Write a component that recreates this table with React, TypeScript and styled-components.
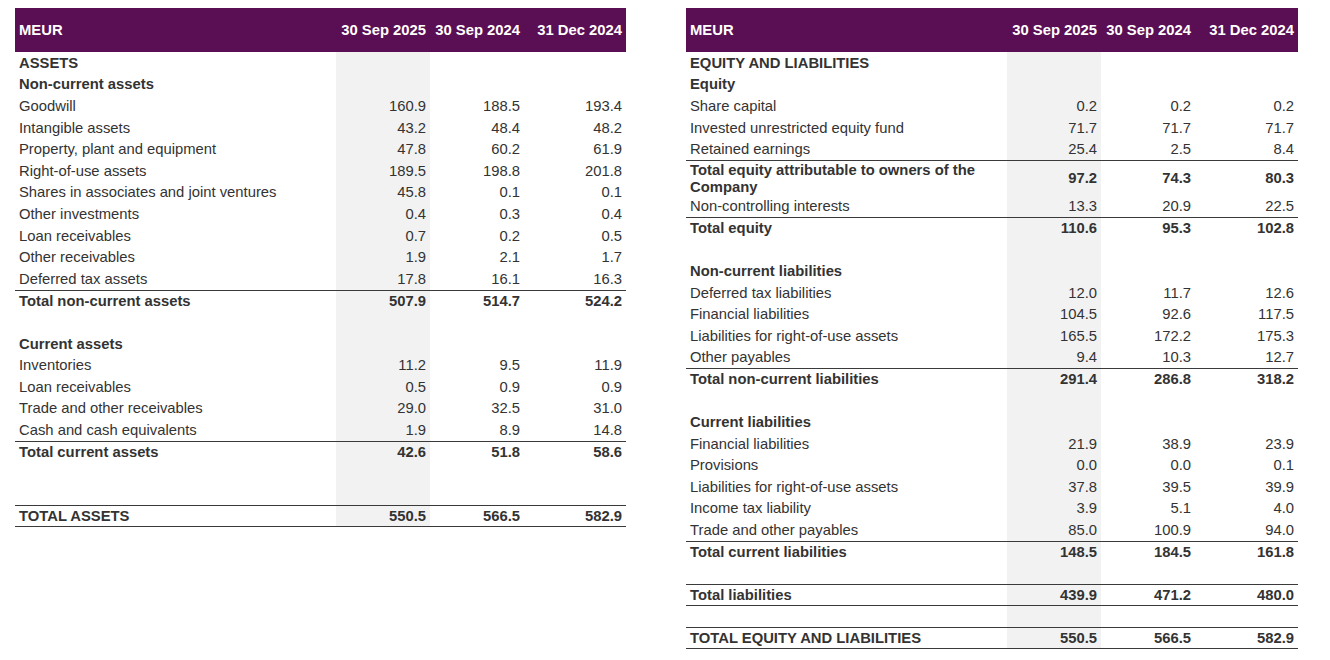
import React from "react";
import styled, { createGlobalStyle, css } from "styled-components";

const Global = createGlobalStyle`
  html, body { margin: 0; padding: 0; background: #fff; }
  body { font-family: "Liberation Sans", Arial, sans-serif; color: #333; }
`;

type Kind = "heading" | "item" | "total" | "blank";
interface RowData {
  label?: string;
  v?: [string, string, string];
  kind: Kind;
  top?: boolean;
  bottom?: boolean;
  tall?: boolean;
}

const Page = styled.div`
  display: flex;
  gap: 60px;
  padding: 8px 0 0 15px;
`;

const Table = styled.div<{ $wide?: boolean }>`
  display: flex;
  flex-direction: column;
  width: ${(p) => (p.$wide ? "612px" : "611px")};
`;

const cols = css`
  display: grid;
  grid-template-columns: 321px 94px 94px 1fr;
`;

const Header = styled.div`
  ${cols};
  height: 44px;
  background: #5a0f54;
  color: #fff;
  font-weight: bold;
  font-size: 14.8px;
  align-items: center;
`;

const HeadCell = styled.div<{ $num?: boolean }>`
  padding: ${(p) => (p.$num ? "0 4px 0 0" : "0 0 0 4px")};
  text-align: ${(p) => (p.$num ? "right" : "left")};
  white-space: nowrap;
`;

const Row = styled.div<{ $top?: boolean; $bottom?: boolean; $tall?: boolean; $bold?: boolean }>`
  ${cols};
  box-sizing: border-box;
  height: ${(p) => (p.$tall ? "35.4px" : "21.6px")};
  font-size: 14.8px;
  line-height: 17px;
  font-weight: ${(p) => (p.$bold ? "bold" : "normal")};
  border-top: ${(p) => (p.$top ? "1px solid #3a3a3a" : "0")};
  border-bottom: ${(p) => (p.$bottom ? "1px solid #3a3a3a" : "0")};
`;

const Label = styled.div`
  display: flex;
  align-items: center;
  padding-left: 4px;
  padding-top: 1px;
`;

const Num = styled.div<{ $shade?: boolean }>`
  display: flex;
  align-items: center;
  justify-content: flex-end;
  padding-right: 4px;
  padding-top: 1px;
  background: ${(p) => (p.$shade ? "#f2f2f2" : "transparent")};
`;

const leftRows: RowData[] = [
  { label: "ASSETS", kind: "heading" },
  { label: "Non-current assets", kind: "heading" },
  { label: "Goodwill", v: ["160.9", "188.5", "193.4"], kind: "item" },
  { label: "Intangible assets", v: ["43.2", "48.4", "48.2"], kind: "item" },
  { label: "Property, plant and equipment", v: ["47.8", "60.2", "61.9"], kind: "item" },
  { label: "Right-of-use assets", v: ["189.5", "198.8", "201.8"], kind: "item" },
  { label: "Shares in associates and joint ventures", v: ["45.8", "0.1", "0.1"], kind: "item" },
  { label: "Other investments", v: ["0.4", "0.3", "0.4"], kind: "item" },
  { label: "Loan receivables", v: ["0.7", "0.2", "0.5"], kind: "item" },
  { label: "Other receivables", v: ["1.9", "2.1", "1.7"], kind: "item" },
  { label: "Deferred tax assets", v: ["17.8", "16.1", "16.3"], kind: "item" },
  { label: "Total non-current assets", v: ["507.9", "514.7", "524.2"], kind: "total", top: true },
  { kind: "blank" },
  { label: "Current assets", kind: "heading" },
  { label: "Inventories", v: ["11.2", "9.5", "11.9"], kind: "item" },
  { label: "Loan receivables", v: ["0.5", "0.9", "0.9"], kind: "item" },
  { label: "Trade and other receivables", v: ["29.0", "32.5", "31.0"], kind: "item" },
  { label: "Cash and cash equivalents", v: ["1.9", "8.9", "14.8"], kind: "item" },
  { label: "Total current assets", v: ["42.6", "51.8", "58.6"], kind: "total", top: true },
  { kind: "blank" },
  { kind: "blank" },
  { label: "TOTAL ASSETS", v: ["550.5", "566.5", "582.9"], kind: "total", top: true, bottom: true },
];

const rightRows: RowData[] = [
  { label: "EQUITY AND LIABILITIES", kind: "heading" },
  { label: "Equity", kind: "heading" },
  { label: "Share capital", v: ["0.2", "0.2", "0.2"], kind: "item" },
  { label: "Invested unrestricted equity fund", v: ["71.7", "71.7", "71.7"], kind: "item" },
  { label: "Retained earnings", v: ["25.4", "2.5", "8.4"], kind: "item" },
  { label: "Total equity attributable to owners of the Company", v: ["97.2", "74.3", "80.3"], kind: "total", top: true, tall: true },
  { label: "Non-controlling interests", v: ["13.3", "20.9", "22.5"], kind: "item" },
  { label: "Total equity", v: ["110.6", "95.3", "102.8"], kind: "total", top: true },
  { kind: "blank" },
  { label: "Non-current liabilities", kind: "heading" },
  { label: "Deferred tax liabilities", v: ["12.0", "11.7", "12.6"], kind: "item" },
  { label: "Financial liabilities", v: ["104.5", "92.6", "117.5"], kind: "item" },
  { label: "Liabilities for right-of-use assets", v: ["165.5", "172.2", "175.3"], kind: "item" },
  { label: "Other payables", v: ["9.4", "10.3", "12.7"], kind: "item" },
  { label: "Total non-current liabilities", v: ["291.4", "286.8", "318.2"], kind: "total", top: true },
  { kind: "blank" },
  { label: "Current liabilities", kind: "heading" },
  { label: "Financial liabilities", v: ["21.9", "38.9", "23.9"], kind: "item" },
  { label: "Provisions", v: ["0.0", "0.0", "0.1"], kind: "item" },
  { label: "Liabilities for right-of-use assets", v: ["37.8", "39.5", "39.9"], kind: "item" },
  { label: "Income tax liability", v: ["3.9", "5.1", "4.0"], kind: "item" },
  { label: "Trade and other payables", v: ["85.0", "100.9", "94.0"], kind: "item" },
  { label: "Total current liabilities", v: ["148.5", "184.5", "161.8"], kind: "total", top: true },
  { kind: "blank" },
  { label: "Total liabilities", v: ["439.9", "471.2", "480.0"], kind: "total", top: true, bottom: true },
  { kind: "blank" },
  { label: "TOTAL EQUITY AND LIABILITIES", v: ["550.5", "566.5", "582.9"], kind: "total", top: true, bottom: true },
];

const heads = ["30 Sep 2025", "30 Sep 2024", "31 Dec 2024"];

function BalanceTable({ rows, wide }: { rows: RowData[]; wide?: boolean }) {
  return (
    <Table $wide={wide}>
      <Header>
        <HeadCell>MEUR</HeadCell>
        {heads.map((h) => (
          <HeadCell key={h} $num>
            {h}
          </HeadCell>
        ))}
      </Header>
      {rows.map((r, i) => (
        <Row
          key={i}
          $top={r.top}
          $bottom={r.bottom}
          $tall={r.tall}
          $bold={r.kind === "heading" || r.kind === "total"}
        >
          <Label>{r.label ?? ""}</Label>
          {[0, 1, 2].map((c) => (
            <Num key={c} $shade={c === 0}>
              {r.v ? r.v[c] : ""}
            </Num>
          ))}
        </Row>
      ))}
    </Table>
  );
}

export default function App() {
  return (
    <>
      <Global />
      <Page>
        <BalanceTable rows={leftRows} />
        <BalanceTable rows={rightRows} wide />
      </Page>
    </>
  );
}
